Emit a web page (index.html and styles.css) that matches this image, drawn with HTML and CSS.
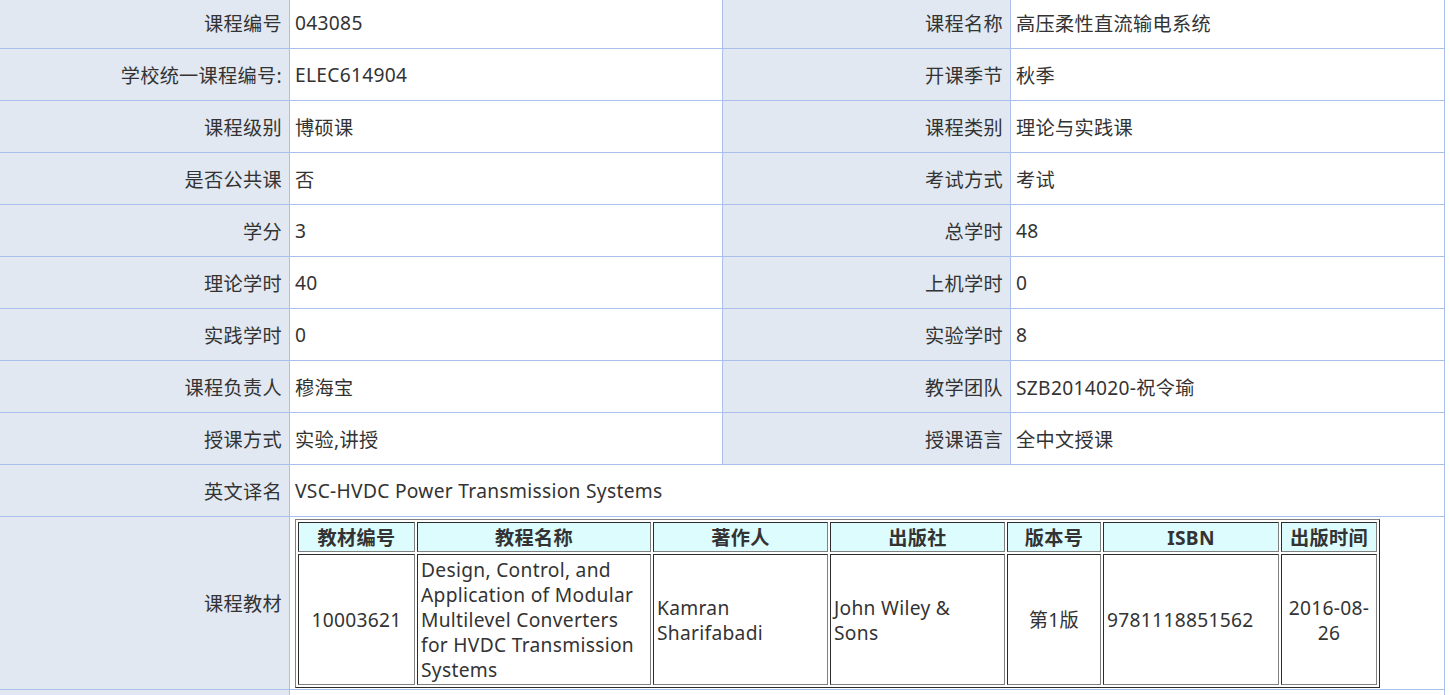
FILE: index.html
```html
<!DOCTYPE html>
<html lang="zh-CN">
<head>
<meta charset="utf-8">
<title>课程信息</title>
<link rel="stylesheet" href="styles.css">
</head>
<body>
<table class="info">
  <colgroup>
    <col class="c-label1"><col class="c-val1"><col class="c-label2"><col class="c-val2">
  </colgroup>
  <tr><th>课程编号</th><td>043085</td><th>课程名称</th><td>高压柔性直流输电系统</td></tr>
  <tr><th>学校统一课程编号:</th><td>ELEC614904</td><th>开课季节</th><td>秋季</td></tr>
  <tr><th>课程级别</th><td>博硕课</td><th>课程类别</th><td>理论与实践课</td></tr>
  <tr><th>是否公共课</th><td>否</td><th>考试方式</th><td>考试</td></tr>
  <tr><th>学分</th><td>3</td><th>总学时</th><td>48</td></tr>
  <tr><th>理论学时</th><td>40</td><th>上机学时</th><td>0</td></tr>
  <tr><th>实践学时</th><td>0</td><th>实验学时</th><td>8</td></tr>
  <tr><th>课程负责人</th><td>穆海宝</td><th>教学团队</th><td>SZB2014020-祝令瑜</td></tr>
  <tr><th>授课方式</th><td>实验,讲授</td><th>授课语言</th><td>全中文授课</td></tr>
  <tr><th>英文译名</th><td colspan="3">VSC-HVDC Power Transmission Systems</td></tr>
  <tr class="books-row"><th>课程教材</th><td colspan="3" class="books-cell">
    <table class="books">
      <colgroup>
        <col class="b1"><col class="b2"><col class="b3"><col class="b4"><col class="b5"><col class="b6"><col class="b7">
      </colgroup>
      <tr class="bh"><th>教材编号</th><th>教程名称</th><th>著作人</th><th>出版社</th><th>版本号</th><th>ISBN</th><th>出版时间</th></tr>
      <tr class="bd">
        <td class="center">10003621</td>
        <td>Design, Control, and Application of Modular Multilevel Converters for HVDC Transmission Systems</td>
        <td>Kamran Sharifabadi</td>
        <td>John Wiley &amp; Sons</td>
        <td class="center">第1版</td>
        <td>9781118851562</td>
        <td class="center">2016-08-26</td>
      </tr>
    </table>
  </td></tr>
  <tr class="tail"><th></th><td colspan="3"></td></tr>
</table>
</body>
</html>
```

FILE: styles.css
```css
html, body {
  margin: 0;
  padding: 0;
  background: #ffffff;
}
body {
  font-family: "Noto Sans", "Noto Sans CJK SC", sans-serif;
  font-size: 19.2px;
  letter-spacing: 0.3px;
  color: #333333;
  overflow: hidden;
}
.info {
  border-collapse: collapse;
  width: 1445px;
  margin-top: -4px;
  margin-left: -1px;
  table-layout: fixed;
}
.c-label1 { width: 290px; }
.c-val1 { width: 433px; }
.c-label2 { width: 288px; }
.c-val2 { width: 434px; }
.info > tbody > tr > th,
.info > tbody > tr > td {
  border: 1px solid #a9c0ec;
  height: 52px;
  padding: 0 5px;
  font-weight: normal;
  vertical-align: middle;
  box-sizing: border-box;
}
.info > tbody > tr > th {
  background: #e1e8f1;
  text-align: right;
  padding-right: 7px;
}
.info > tbody > tr > td {
  text-align: left;
}
.info > tbody > tr.books-row > td.books-cell {
  padding: 2px 5px 1px 5px;
}
.books {
  border: 1px outset #808080;
  border-spacing: 2px;
  width: 1083px;
  table-layout: fixed;
  line-height: 25px;
}
.b1 { width: 117px; }
.b2 { width: 234px; }
.b3 { width: 175px; }
.b4 { width: 175px; }
.b5 { width: 94px; }
.b6 { width: 176px; }
.b7 { width: 96px; }
.books th,
.books td {
  border: 1px inset #808080;
  padding: 1px 8px 1px 3px;
}
.books .bh th {
  background: #dcfcfd;
  font-weight: bold;
  height: 28px;
  padding: 0 1px;
  text-align: center;
}
.books .bd td {
  height: 127px;
  text-align: left;
  vertical-align: middle;
}
.books .bd td.center {
  text-align: center;
  padding: 1px 2px;
}
```
